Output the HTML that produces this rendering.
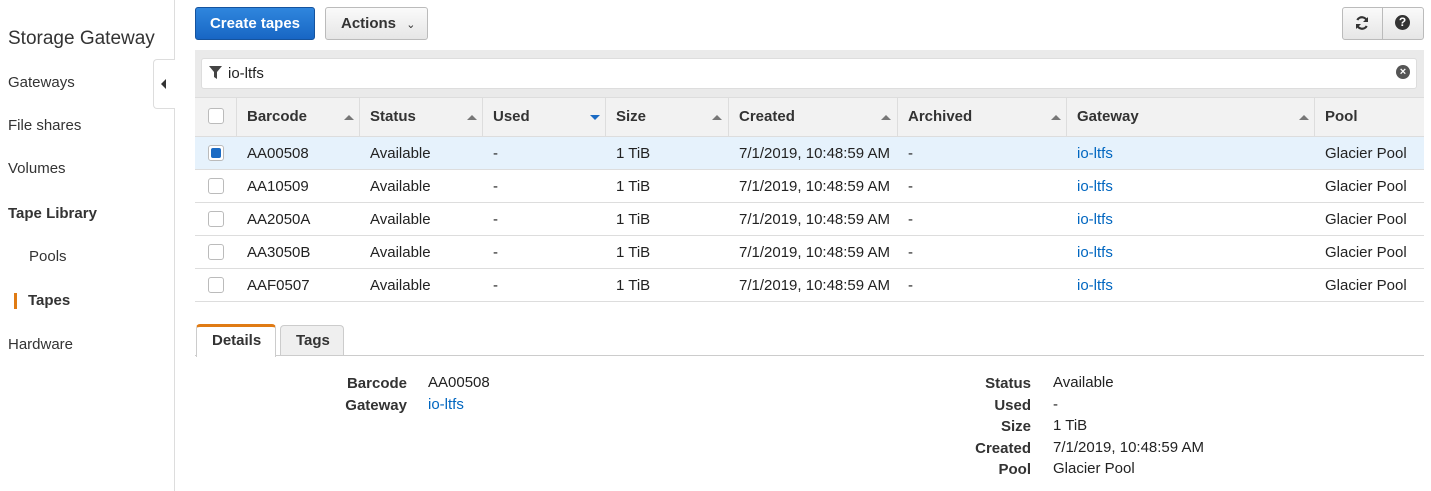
<!DOCTYPE html>
<html><head><meta charset="utf-8"><style>
*{margin:0;padding:0;box-sizing:border-box}
body{width:1431px;height:491px;background:#fff;font-family:"Liberation Sans",Arial,sans-serif;color:#222;font-size:15px;position:relative;overflow:hidden}
.a{position:absolute;white-space:nowrap}
.b{font-weight:bold}
.lk{color:#0066c0}
.hdr{position:absolute;top:97px;height:40px;background:#f2f2f2;border-bottom:1px solid #ddd;border-top:1px solid #ddd}
.vl{position:absolute;top:97px;height:40px;width:1px;background:#ddd}
.row{position:absolute;left:195px;width:1229px;height:33px;border-bottom:1px solid #ddd}
.cb{position:absolute;left:208px;width:16px;height:16px;border:1px solid #bbb;border-radius:3px;background:#fff}
.up{position:absolute;width:0;height:0;border-left:5px solid transparent;border-right:5px solid transparent;border-bottom:5px solid #777}
</style></head><body>
<div class="a" style="left:174px;top:0;width:1px;height:491px;background:#ddd"></div>
<div class="a" style="left:8px;top:28px;font-size:19px;color:#333">Storage Gateway</div>
<div class="a" style="left:8px;top:74px;color:#333">Gateways</div>
<div class="a" style="left:8px;top:117px;color:#333">File shares</div>
<div class="a" style="left:8px;top:160px;color:#333">Volumes</div>
<div class="a b" style="left:8px;top:205px;color:#333">Tape Library</div>
<div class="a" style="left:29px;top:248px;color:#333">Pools</div>
<div class="a" style="left:14px;top:293px;width:3px;height:16px;background:#e07b14"></div>
<div class="a b" style="left:28px;top:292px;color:#333">Tapes</div>
<div class="a" style="left:8px;top:336px;color:#333">Hardware</div>
<div class="a" style="left:153px;top:59px;width:22px;height:50px;background:#fff;border:1px solid #ddd;border-right:none;border-radius:4px 0 0 4px"></div>
<div class="a" style="left:161px;top:79px;border-top:5px solid transparent;border-bottom:5px solid transparent;border-right:5px solid #333"></div>

<div class="a b" style="left:195px;top:7px;width:120px;height:33px;background:linear-gradient(#2f86dd,#1866c4);border:1px solid #15539e;border-radius:3px;color:#fff;text-align:center;line-height:31px">Create tapes</div>
<div class="a b" style="left:325px;top:7px;width:103px;height:33px;background:linear-gradient(#fafafa,#e6e6e6);border:1px solid #bbb;border-radius:3px;color:#333;line-height:31px;padding-left:15px">Actions <span style="font-weight:normal;font-size:11px;margin-left:6px">&#8964;</span></div>
<div class="a" style="left:1342px;top:7px;width:82px;height:33px;background:linear-gradient(#fafafa,#e6e6e6);border:1px solid #bbb;border-radius:3px"></div>
<div class="a" style="left:1382px;top:7px;width:1px;height:33px;background:#bbb"></div>
<svg class="a" style="left:1354px;top:15px" width="16" height="16" viewBox="0 0 16 16"><path d="M13 6.5A5.2 5.2 0 0 0 3.3 5M3 9.5A5.2 5.2 0 0 0 12.7 11" fill="none" stroke="#333" stroke-width="2.2"/><path d="M14 2v5h-5zM2 14V9h5z" fill="#333"/></svg>
<div class="a b" style="left:1395px;top:15px;width:15px;height:15px;border-radius:50%;background:#333;color:#fff;font-size:12px;text-align:center;line-height:15px">?</div>

<div class="a" style="left:195px;top:50px;width:1229px;height:47px;background:#eaeaea"></div>
<div class="a" style="left:201px;top:58px;width:1216px;height:31px;background:#fff;border:1px solid #ddd;border-radius:3px"></div>
<svg class="a" style="left:209px;top:66px" width="13" height="13" viewBox="0 0 13 13"><path d="M0 0h13L8 6v7L5 11V6z" fill="#444"/></svg>
<div class="a" style="left:228px;top:65px;color:#222">io-ltfs</div>
<div class="a b" style="left:1396px;top:65px;width:14px;height:14px;border-radius:50%;background:#555;color:#fff;font-size:11px;text-align:center;line-height:14px">×</div>

<div class="hdr" style="left:195px;width:1229px"></div>
<div class="vl" style="left:236px"></div><div class="vl" style="left:359px"></div><div class="vl" style="left:482px"></div><div class="vl" style="left:605px"></div><div class="vl" style="left:728px"></div><div class="vl" style="left:897px"></div><div class="vl" style="left:1066px"></div><div class="vl" style="left:1314px"></div>
<div class="cb" style="top:108px"></div>
<div class="a b" style="left:247px;top:108px;color:#333">Barcode</div><div class="up" style="left:344px;top:115px"></div>
<div class="a b" style="left:370px;top:108px;color:#333">Status</div><div class="up" style="left:467px;top:115px"></div>
<div class="a b" style="left:493px;top:108px;color:#333">Used</div><div class="a" style="left:590px;top:115px;border-left:5px solid transparent;border-right:5px solid transparent;border-top:5px solid #1a6bc4"></div>
<div class="a b" style="left:616px;top:108px;color:#333">Size</div><div class="up" style="left:712px;top:115px"></div>
<div class="a b" style="left:739px;top:108px;color:#333">Created</div><div class="up" style="left:881px;top:115px"></div>
<div class="a b" style="left:908px;top:108px;color:#333">Archived</div><div class="up" style="left:1051px;top:115px"></div>
<div class="a b" style="left:1077px;top:108px;color:#333">Gateway</div><div class="up" style="left:1299px;top:115px"></div>
<div class="a b" style="left:1325px;top:108px;color:#333">Pool</div>

<div class="row" style="top:137px;background:#e6f2fc"></div>
<div class="row" style="top:170px"></div>
<div class="row" style="top:203px"></div>
<div class="row" style="top:236px"></div>
<div class="row" style="top:269px"></div>

<div class="cb" style="top:145px"></div><div class="a" style="left:211px;top:148px;width:10px;height:10px;background:#1a6bc4;border-radius:2px"></div>
<div class="a" style="left:247px;top:145px">AA00508</div><div class="a" style="left:370px;top:145px">Available</div><div class="a" style="left:493px;top:145px">-</div><div class="a" style="left:616px;top:145px">1 TiB</div><div class="a" style="left:739px;top:145px">7/1/2019, 10:48:59 AM</div><div class="a" style="left:908px;top:145px">-</div><div class="a lk" style="left:1077px;top:145px">io-ltfs</div><div class="a" style="left:1325px;top:145px">Glacier Pool</div>

<div class="cb" style="top:178px"></div>
<div class="a" style="left:247px;top:178px">AA10509</div><div class="a" style="left:370px;top:178px">Available</div><div class="a" style="left:493px;top:178px">-</div><div class="a" style="left:616px;top:178px">1 TiB</div><div class="a" style="left:739px;top:178px">7/1/2019, 10:48:59 AM</div><div class="a" style="left:908px;top:178px">-</div><div class="a lk" style="left:1077px;top:178px">io-ltfs</div><div class="a" style="left:1325px;top:178px">Glacier Pool</div>

<div class="cb" style="top:211px"></div>
<div class="a" style="left:247px;top:211px">AA2050A</div><div class="a" style="left:370px;top:211px">Available</div><div class="a" style="left:493px;top:211px">-</div><div class="a" style="left:616px;top:211px">1 TiB</div><div class="a" style="left:739px;top:211px">7/1/2019, 10:48:59 AM</div><div class="a" style="left:908px;top:211px">-</div><div class="a lk" style="left:1077px;top:211px">io-ltfs</div><div class="a" style="left:1325px;top:211px">Glacier Pool</div>

<div class="cb" style="top:244px"></div>
<div class="a" style="left:247px;top:244px">AA3050B</div><div class="a" style="left:370px;top:244px">Available</div><div class="a" style="left:493px;top:244px">-</div><div class="a" style="left:616px;top:244px">1 TiB</div><div class="a" style="left:739px;top:244px">7/1/2019, 10:48:59 AM</div><div class="a" style="left:908px;top:244px">-</div><div class="a lk" style="left:1077px;top:244px">io-ltfs</div><div class="a" style="left:1325px;top:244px">Glacier Pool</div>

<div class="cb" style="top:277px"></div>
<div class="a" style="left:247px;top:277px">AAF0507</div><div class="a" style="left:370px;top:277px">Available</div><div class="a" style="left:493px;top:277px">-</div><div class="a" style="left:616px;top:277px">1 TiB</div><div class="a" style="left:739px;top:277px">7/1/2019, 10:48:59 AM</div><div class="a" style="left:908px;top:277px">-</div><div class="a lk" style="left:1077px;top:277px">io-ltfs</div><div class="a" style="left:1325px;top:277px">Glacier Pool</div>

<div class="a" style="left:195px;top:355px;width:1229px;height:1px;background:#ccc"></div>
<div class="a" style="left:196px;top:324px;width:80px;height:33px;background:#fff;border:1px solid #ccc;border-top:3px solid #e07b14;border-bottom:none;border-radius:4px 4px 0 0"></div>
<div class="a b" style="left:212px;top:332px;color:#333">Details</div>
<div class="a" style="left:280px;top:325px;width:64px;height:30px;background:#efefef;border:1px solid #ccc;border-bottom:none;border-radius:4px 4px 0 0"></div>
<div class="a b" style="left:296px;top:332px;color:#333">Tags</div>

<div class="a b" style="left:300px;top:375px;width:107px;text-align:right;color:#333">Barcode</div><div class="a" style="left:428px;top:374px">AA00508</div>
<div class="a b" style="left:300px;top:397px;width:107px;text-align:right;color:#333">Gateway</div><div class="a lk" style="left:428px;top:396px">io-ltfs</div>

<div class="a b" style="left:930px;top:375px;width:101px;text-align:right;color:#333">Status</div><div class="a" style="left:1053px;top:374px">Available</div>
<div class="a b" style="left:930px;top:397px;width:101px;text-align:right;color:#333">Used</div><div class="a" style="left:1053px;top:396px">-</div>
<div class="a b" style="left:930px;top:418px;width:101px;text-align:right;color:#333">Size</div><div class="a" style="left:1053px;top:417px">1 TiB</div>
<div class="a b" style="left:930px;top:440px;width:101px;text-align:right;color:#333">Created</div><div class="a" style="left:1053px;top:439px">7/1/2019, 10:48:59 AM</div>
<div class="a b" style="left:930px;top:461px;width:101px;text-align:right;color:#333">Pool</div><div class="a" style="left:1053px;top:460px">Glacier Pool</div>
</body></html>
